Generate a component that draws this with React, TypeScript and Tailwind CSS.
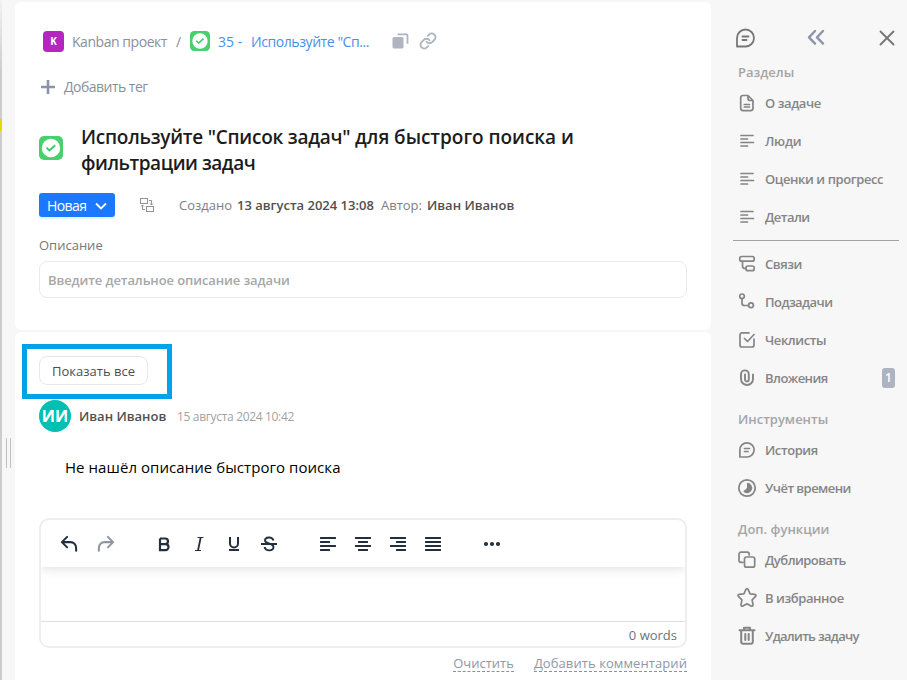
import type { ReactNode } from "react";

function Svg({ size = 24, w = 2, className = "", children }: { size?: number; w?: number; className?: string; children: ReactNode }) {
  return (
    <svg width={size} height={size} viewBox="0 0 24 24" fill="none" stroke="currentColor" strokeWidth={w} strokeLinecap="round" strokeLinejoin="round" className={"block shrink-0 " + className}>
      {children}
    </svg>
  );
}

function Check({ size }: { size: number }) {
  return (
    <svg width={size} height={size} viewBox="0 0 24 24" className="block shrink-0">
      <rect width="24" height="24" rx="5" fill="#48d06c" />
      <circle cx="12" cy="12" r="9.2" fill="#fff" />
      <path d="M7.500 11.700l3 2.700 5.700-5.200" fill="none" stroke="#3fca64" strokeWidth="1.900" />
    </svg>
  );
}

const icons: Record<string, ReactNode> = {
  doc: <Svg w={1.7}><path d="M7.500 4.500H13l5 5v7.800a2.300 2.300 0 0 1-2.300 2.300H8a2.300 2.300 0 0 1-2.300-2.300V6.800A2.300 2.300 0 0 1 8 4.500M13 4.800v2.700a2 2 0 0 0 2 2h2.700M9.300 13.500h5.200M9.300 16h5.200" /></Svg>,
  lines: <Svg w={1.7}><path d="M6 6.500h12M6 10h6.500M6 13.500h12.500M6 17h6.500" /></Svg>,
  links: <Svg w={1.7}><rect x="4.700" y="4.500" width="14.500" height="4.700" rx="2" /><rect x="11" y="14" width="8.200" height="4.700" rx="2" /><path d="M7.500 9.500v4.500q0 2.500 3 2.500" /></Svg>,
  sub: <Svg w={1.7}><circle cx="7" cy="6.300" r="2.300" /><circle cx="16" cy="15.300" r="2.400" /><path d="M7 9v4.200q0 2.300 2.300 2.300h4" /></Svg>,
  check: <Svg w={1.7}><path d="M14 4.900H7A2 2 0 0 0 5 7v10a2 2 0 0 0 2 2h10a2 2 0 0 0 2-2v-6M9.500 10.500l3 3 6.500-7" /></Svg>,
  clip: <Svg w={1.900}><path d="M18 8.500v4.500a6 6 0 0 1-12 0V8.300a3.900 3.900 0 0 1 7.800 0v5.200a1.900 1.900 0 0 1-3.800 0V8.500" /></Svg>,
  chat: <Svg w={1.700}><path d="M4.900 19v-7a7.100 7.100 0 1 1 7.100 7zM9.500 10.500h5M9.500 13.500h3.500" /></Svg>,
  time: <Svg w={1.800}><circle cx="12" cy="12" r="8.200" /><path d="M12 6.800a5.200 5.200 0 1 1-3.800 8.700L12 12z" fill="currentColor" stroke="none" /></Svg>,
  dup: <Svg w={1.700}><path d="M8 14.300H6a2 2 0 0 1-2-2V6.200a2 2 0 0 1 2-2h6.200a2 2 0 0 1 2 2V7" /><rect x="9.500" y="9" width="10.200" height="10.200" rx="2" /></Svg>,
  star: <Svg w={1.700}><path d="M10.700 3.800q1.300-2.200 2.600 0l1.800 4 4.500.6q2.300.6.800 2.300l-3.300 3.200.9 4.600q.1 2.300-2 1.500l-4-2.200-4 2.200q-2.100.8-2-1.500l.9-4.600-3.300-3.200q-1.500-1.700.8-2.300l4.500-.6z" /></Svg>,
  trash: <Svg w={2}><path d="M4.500 6.200h15M6.200 6.500v11.300q0 2 2 2h7.600q2 0 2-2V6.500M9 6V3.800h6V6M10.300 10v6M13.700 10v6" /></Svg>,
};

function Item({ icon, text, track = "tracking-[-0.42px]", badge, h = "h-[38px]" }: { icon: string; text: string; track?: string; badge?: string; h?: string }) {
  return (
    <div className={"flex shrink-0 items-center pl-6 text-[13px] font-semibold text-[#858585] " + h}>
      {icons[icon]}
      <span className={"ml-[6px] pt-[2px] " + track}>{text}</span>
      {badge && <span className="mr-3 ml-auto flex h-5 w-[13px] items-center justify-center rounded-[3px] bg-[#adb3c0] text-[12px] text-white">{badge}</span>}
    </div>
  );
}

function Head({ text }: { text: string }) {
  return <div className="mt-[10px] flex h-6 shrink-0 items-center pt-[2px] pl-[27px] text-[13px] font-semibold text-[#a5a5a5]">{text}</div>;
}

function Lines({ rows }: { rows: [number, number][] }) {
  return (
    <svg width="18" height="18" viewBox="0 0 18 18" className="block">
      {rows.map(([a, b], i) => <rect key={i} x={a} y={2 + i * 4} width={b} height="2" rx=".5" fill="#222f3e" />)}
    </svg>
  );
}

export default function App() {
  return (
    <div className="flex h-[680px] w-[907px] overflow-hidden bg-[#f7f7f7] font-['Open_Sans','Noto_Sans',sans-serif] whitespace-nowrap">
      <div className="flex w-[2px] shrink-0 flex-col bg-[#cdcdcd]">
        <div className="h-[119px] bg-gradient-to-b from-[#f2f2f2] to-[#cdcdcd] to-60%" />
        <div className="h-3 bg-[#dfdc00]" />
      </div>
      <div className="flex w-[13px] shrink-0 gap-[3px] pt-[438px] pl-1">
        <div className="h-[30px] w-px bg-[#c0c0c0]" />
        <div className="h-[30px] w-px bg-[#c0c0c0]" />
      </div>

      <main className="flex w-[696px] shrink-0 flex-col gap-[2px] pt-[2px]">
        <section className="h-[328px] shrink-0 rounded-md bg-white px-6 pt-[27px]">
          <div className="flex h-6 items-center pl-1 text-[14px] text-[#8a8f9c]">
            <div className="flex h-[21px] w-[21px] items-center justify-center rounded-[4px] bg-[#b526bf] text-[10px] font-bold text-white">K</div>
            <span className="ml-2 w-[95px] tracking-[-0.450px]">Kanban проект</span>
            <span className="ml-[9px] w-[6px]">/</span>
            <div className="ml-2"><Check size={20} /></div>
            <span className="ml-[8px] w-[25px] text-[#4790ed]">35 -</span>
            <span className="ml-2 w-[119px] tracking-[-0.420px] text-[#4790ed]">Используйте "Сп...</span>
            <svg width="18" height="18" viewBox="0 0 18 18" className="ml-[21px] block"><path d="M6.500 2.300H15a1.500 1.500 0 0 1 1.500 1.500v8" fill="none" stroke="#aeb4c0" strokeWidth="1.800" /><rect x="1.500" y="5" width="11" height="11.500" rx="1.500" fill="#aeb4c0" /></svg>
            <Svg size={18} w={2.600} className="ml-[10px] text-[#aeb4c0]"><path d="M10 13a5 5 0 0 0 7.540.54l3-3a5 5 0 0 0-7.070-7.070l-1.720 1.710M14 11a5 5 0 0 0-7.540-.54l-3 3a5 5 0 0 0 7.070 7.070l1.710-1.710" /></Svg>
          </div>
          <div className="mt-[22px] flex h-6 items-center text-[14px] text-[#8a8f9c]">
            <svg width="18" height="18" viewBox="0 0 18 18"><path d="M9 2v14M2 9h14" stroke="#8e94a8" strokeWidth="2.600" /></svg>
            <span className="ml-[7px] pb-[2px] tracking-[-0.520px]">Добавить тег</span>
          </div>
          <div className="mt-[25px] flex h-[52px] items-center">
            <div className="pb-1"><Check size={24} /></div>
            <h1 className="ml-[18px] text-[19px] leading-[26px] font-semibold text-[#1c1c1c]">
              <span className="block tracking-[-0.040px]"><span className="tracking-[-0.250px]">Используйте "Список задач"</span> для быстрого поиска и</span>
              <span className="block tracking-[-0.480px]">фильтрации задач</span>
            </h1>
          </div>
          <div className="mt-[17px] flex h-6 items-center text-[13px] text-[#7e7e7e]">
            <div className="flex h-6 w-[76px] items-center rounded-[3px] bg-[#1a79ff] pl-2 text-[14px] text-white shadow-[0_2px_0_#e6f3ff]">
              <span className="w-[40px] tracking-[-0.600px]">Новая</span>
              <svg width="12" height="8" viewBox="0 0 12 8" className="mt-[2px] ml-2"><path d="M1 1.500l5 5 5-5" fill="none" stroke="#fff" strokeWidth="1.800" /></svg>
            </div>
            <svg width="16" height="16" viewBox="0 0 16 16" className="ml-6" fill="none" stroke="#929292"><rect x="1.500" y="1.500" width="7" height="5" /><rect x="7.500" y="9.500" width="7" height="5" /><path d="M10 3.500h2.500V8M11 6.500l1.500 1.500L14 6.500M6 12.500H3.500V8M2 9.500L3.500 8 5 9.500" /></svg>
            <span className="ml-6 w-[54px] pt-[2px]">Создано</span>
            <b className="ml-1 w-[137px] pt-[2px] font-semibold text-[#505050]">13 августа 2024 13:08</b>
            <span className="ml-[7px] w-[42px] pt-[2px]">Автор:</span>
            <b className="ml-1 pt-[2px] font-semibold text-[#505050]">Иван Иванов</b>
          </div>
          <div className="mt-[18px] flex h-5 items-center pt-[2px] text-[13px] text-[#777]">Описание</div>
          <div className="mt-[6px] flex h-[37px] items-center rounded-lg border border-[#e8eaf0] pt-[2px] pl-2 text-[13px] font-semibold tracking-[-0.1px] text-[#a7a7a7]">Введите детальное описание задачи</div>
        </section>

        <section className="relative h-[360px] shrink-0 rounded-t-md bg-white px-6 pt-6">
          <div className="absolute top-3 left-[7px] h-[55px] w-[150px] border-[5px] border-[#00a2e8]" />
          <div className="flex h-[29px] w-[109px] items-center justify-center rounded-lg border border-[#e7e7e7] pt-[2px] text-[13px] text-[#4d4d4d]">Показать все</div>
          <div className="mt-[15px] flex h-8 items-center">
            <div className="flex h-8 w-8 items-center justify-center rounded-full bg-[#02bfb2] text-[16px] font-bold text-white">ИИ</div>
            <span className="ml-2 w-[89px] pt-px text-[13px] font-semibold text-[#505050]">Иван Иванов</span>
            <span className="ml-[9px] pt-[2px] text-[12px] tracking-[-0.330px] text-[#a2a2a2]">15 августа 2024 10:42</span>
          </div>
          <div className="mt-[23px] flex h-6 items-center pl-[26px] text-[15px] tracking-[0.060px] text-black">Не нашёл описание быстрого поиска</div>

          <div className="mt-[39px] flex h-[130px] flex-col overflow-hidden rounded-[10px] border-2 border-[#eee]">
            <div className="flex h-[47px] shrink-0 items-center pl-[19px] text-[#222f3e] shadow-[0_2px_10px_rgba(0,0,0,0.12)]">
              <Svg size={18} w={2.700}><path d="M9.500 2.500L2.500 9.500l7 7M3 9.500h11a7.500 7.500 0 0 1 7.500 7.500v4" /></Svg>
              <Svg size={18} w={2.700} className="ml-[19px] opacity-50"><path d="M14.500 2.500l7 7-7 7M21 9.500H10A7.500 7.500 0 0 0 2.500 17v4" /></Svg>
              <svg width="18" height="18" viewBox="0 0 18 18" className="ml-[40px]" fill="none" stroke="#222f3e" strokeWidth="2.200"><path d="M5 3.500h5.200a2.700 2.700 0 0 1 0 5.600H5M5 9.100h5.500a3 3 0 0 1 0 6H5zM5 3.500v11.600" /></svg>
              <svg width="18" height="18" viewBox="0 0 18 18" className="ml-[17px]" fill="none" stroke="#222f3e" strokeWidth="1.200"><path d="M7.500 2.500h6M5 15.500h6" /><path d="M10.600 3L8 15.500" strokeWidth="1.800" /></svg>
              <svg width="18" height="18" viewBox="0 0 18 18" className="ml-[17px]" fill="none" stroke="#222f3e" strokeWidth="2"><path d="M5 2v6.500a4 4 0 0 0 8 0V2M4 15h10" /></svg>
              <svg width="18" height="18" viewBox="0 0 18 18" className="ml-[17px]" fill="none" stroke="#222f3e" strokeWidth="1.900"><path d="M13.500 5.500C12 1 5 2 5 5.500S13.500 8 13.500 12 6 17 4.500 12M1 9h16" /></svg>
              <div className="ml-[41px] flex gap-[17px]">
                <Lines rows={[[1, 16], [1, 10], [1, 16], [1, 10]]} />
                <Lines rows={[[1, 16], [4, 10], [1, 16], [4, 10]]} />
                <Lines rows={[[1, 16], [7, 10], [1, 16], [7, 10]]} />
                <Lines rows={[[1, 16], [1, 16], [1, 16], [1, 16]]} />
              </div>
              <svg width="18" height="6" viewBox="0 0 18 6" className="ml-[41px]" fill="#222f3e"><circle cx="3" cy="3" r="2.100" /><circle cx="9" cy="3" r="2.100" /><circle cx="15" cy="3" r="2.100" /></svg>
            </div>
            <div className="h-[54px] shrink-0" />
            <div className="flex h-[25px] shrink-0 items-center justify-end border-t border-[#e0e0e0] pt-1 pr-2 text-[13px] text-[#6d727c]">0 words</div>
          </div>
          <div className="mt-[7px] flex justify-end gap-5 text-[13px] leading-[17px] text-[#9196a8]">
            <span className="h-[17px] border-b border-dashed border-[#888fae]">Очистить</span>
            <span className="h-[17px] border-b border-dashed border-[#888fae] tracking-[0.080px]">Добавить комментарий</span>
          </div>
        </section>
      </main>

      <aside className="flex w-[196px] shrink-0 flex-col pt-[26px]">
        <div className="flex h-6 items-center pl-[22px] text-[#777]">
          <Svg w={1.800}><path d="M4 20.500V12a8.500 8.500 0 1 1 8.500 8.500zM9.500 10.500h6M9.500 14h4" /></Svg>
          <Svg w={2.400} className="ml-[47px] text-[#8f94aa]"><path d="M11 5l-6 6.300 6 6.300M19 5l-6 6.300 6 6.300" /></Svg>
          <Svg w={1.900} className="ml-[47px]"><path d="M5.500 5.500l13 13M18.500 5.500l-13 13" /></Svg>
        </div>
        <Head text="Разделы" />
        <Item icon="doc" text="О задаче" />
        <Item icon="lines" text="Люди" track="tracking-[-0.300px]" />
        <Item icon="lines" text="Оценки и прогресс" />
        <Item icon="lines" text="Детали" track="tracking-[-0.550px]" />
        <div className="mt-[4px] mr-2 mb-[4px] ml-[22px] h-px shrink-0 bg-[#a2a2a2]" />
        <Item icon="links" text="Связи" />
        <Item icon="sub" text="Подзадачи" track="tracking-[-0.550px]" />
        <Item icon="check" text="Чеклисты" />
        <Item icon="clip" text="Вложения" track="tracking-[-0.550px]" badge="1" />
        <Head text="Инструменты" />
        <Item icon="chat" text="История" />
        <Item icon="time" text="Учёт времени" track="tracking-[-0.550px]" />
        <Head text="Доп. функции" />
        <Item icon="dup" text="Дублировать" track="tracking-[-0.550px]" />
        <Item icon="star" text="В избранное" />
        <Item icon="trash" text="Удалить задачу" track="tracking-[-0.700px]" h="h-[37px]" />
      </aside>
    </div>
  );
}
